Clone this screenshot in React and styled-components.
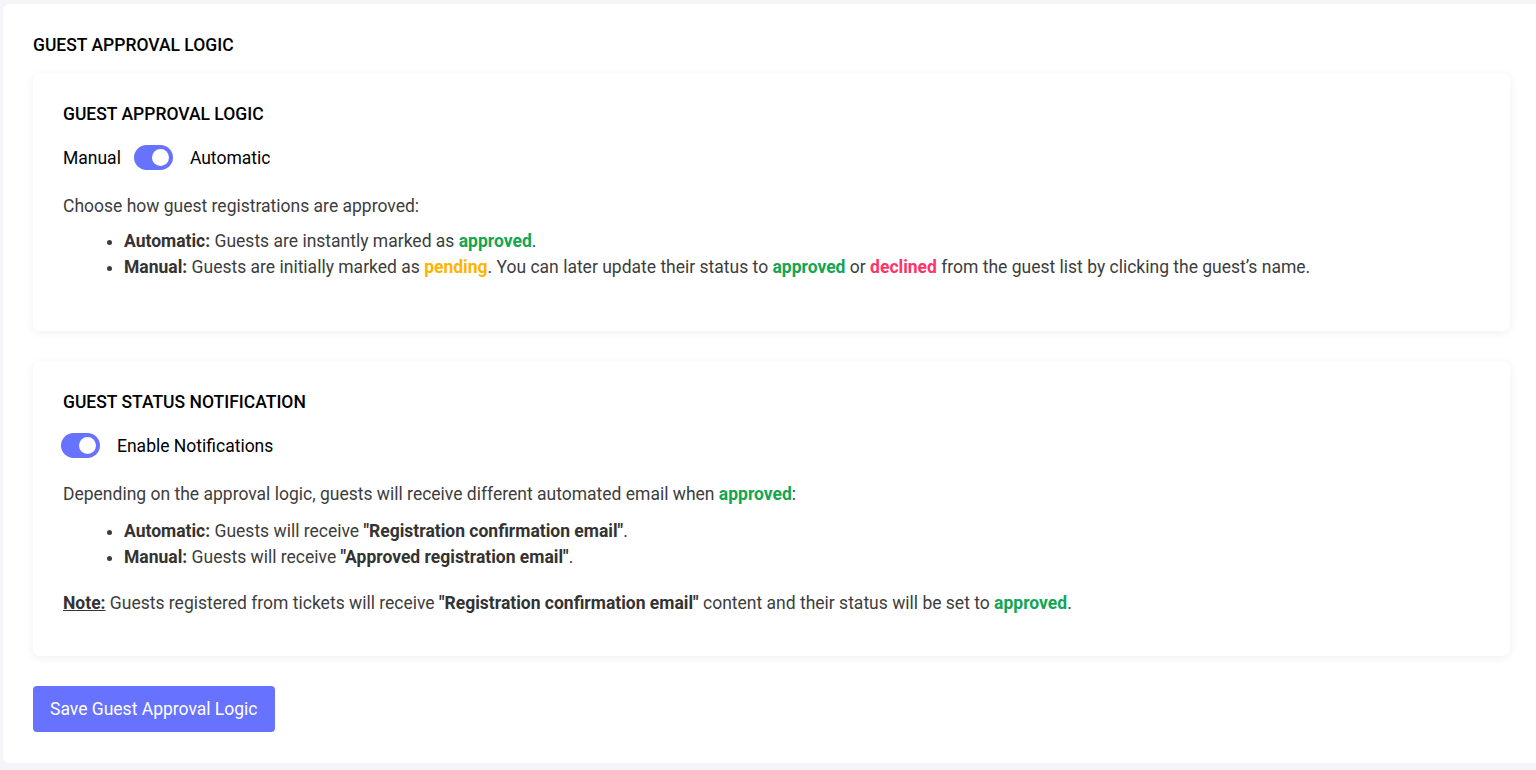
import React, { useState } from "react";
import styled, { createGlobalStyle } from "styled-components";

const GlobalStyle = createGlobalStyle`
  html, body {
    margin: 0;
    padding: 0;
    background: #f5f5f9;
    overflow: hidden;
  }
  body {
    font-family: Roboto, "Liberation Sans", Arial, sans-serif;
    font-size: 17.5px;
    color: #3d3d3d;
  }
  * { box-sizing: border-box; }
`;

const Page = styled.div`
  background: #ffffff;
  margin: 4px -4px 0 3px;
  padding: 29px 30px 31px 30px;
  border-radius: 6px;
  min-height: 759px;
`;

const PageTitle = styled.h2`
  margin: 0 0 16px;
  font-size: 17.5px;
  line-height: 24px;
  font-weight: 500;
  color: #000;
  text-transform: uppercase;
`;

const Card = styled.section`
  background: #fff;
  border-radius: 7px;
  box-shadow: 0 2px 8px rgba(40, 40, 70, 0.07);
  padding: 29px 30px 30px 30px;
  margin-bottom: 30px;
`;

const CardTitle = styled.h3`
  margin: 0 0 19px;
  font-size: 17.5px;
  line-height: 24px;
  font-weight: 500;
  color: #000;
`;

const ToggleRow = styled.div`
  display: flex;
  align-items: center;
  height: 25px;
  margin-left: ${(p) => p.$shift || 0}px;
  color: #000;
`;

const Label = styled.span`
  margin-right: ${(p) => p.$mr || 0}px;
  margin-left: ${(p) => p.$ml || 0}px;
`;

const Track = styled.button`
  width: 39px;
  height: 25px;
  border: none;
  padding: 0 4px;
  border-radius: 13px;
  background: ${(p) => (p.$on ? "#6772fe" : "#c9cbd6")};
  display: flex;
  align-items: center;
  justify-content: ${(p) => (p.$on ? "flex-end" : "flex-start")};
  cursor: pointer;
`;

const Knob = styled.span`
  width: 17px;
  height: 17px;
  border-radius: 50%;
  background: #fff;
`;

const Text = styled.p`
  margin: ${(p) => p.$top || 24}px 0 0;
  line-height: 24px;
`;

const List = styled.ul`
  margin: ${(p) => p.$top || 10}px 0 ${(p) => p.$bottom || 0}px;
  padding-left: 61px;
  line-height: 26px;
`;

const Strong = styled.b`
  font-weight: 700;
  color: #333;
`;

const Note = styled.b`
  font-weight: 700;
  text-decoration: underline;
  color: #333;
`;

const Status = styled.b`
  font-weight: 700;
  color: ${(p) => p.$color};
`;

const Spacer = styled.div`
  height: 11px;
`;

const SaveButton = styled.button`
  height: 46px;
  padding: 0 17px;
  border: none;
  border-radius: 4px;
  background: #6772fe;
  color: #fff;
  font-family: Roboto, "Liberation Sans", Arial, sans-serif;
  font-size: 17.5px;
  cursor: pointer;
`;

const GREEN = "#12a552";
const ORANGE = "#ffb400";
const PINK = "#ff3366";

function Toggle({ on, onChange }) {
  return (
    <Track $on={on} onClick={() => onChange(!on)}>
      <Knob />
    </Track>
  );
}

export default function App() {
  const [auto, setAuto] = useState(true);
  const [notify, setNotify] = useState(true);

  return (
    <>
      <GlobalStyle />
      <Page>
        <PageTitle>Guest Approval Logic</PageTitle>

        <Card>
          <CardTitle>GUEST APPROVAL LOGIC</CardTitle>
          <ToggleRow>
            <Label $mr={13}>Manual</Label>
            <Toggle on={auto} onChange={setAuto} />
            <Label $ml={17}>Automatic</Label>
          </ToggleRow>
          <Text $top={24}>Choose how guest registrations are approved:</Text>
          <List $bottom={21}>
            <li>
              <Strong>Automatic:</Strong> Guests are instantly marked as{" "}
              <Status $color={GREEN}>approved</Status>.
            </li>
            <li>
              <Strong>Manual:</Strong> Guests are initially marked as{" "}
              <Status $color={ORANGE}>pending</Status>. You can later update their
              status to <Status $color={GREEN}>approved</Status> or{" "}
              <Status $color={PINK}>declined</Status> from the guest list by
              clicking the guest’s name.
            </li>
          </List>
        </Card>

        <Card>
          <CardTitle>GUEST STATUS NOTIFICATION</CardTitle>
          <ToggleRow $shift={-2}>
            <Toggle on={notify} onChange={setNotify} />
            <Label $ml={17}>Enable Notifications</Label>
          </ToggleRow>
          <Text $top={24}>
            Depending on the approval logic, guests will receive different
            automated email when <Status $color={GREEN}>approved</Status>:
          </Text>
          <List $top={12}>
            <li>
              <Strong>Automatic:</Strong> Guests will receive{" "}
              <Strong>"Registration confirmation email"</Strong>.
            </li>
            <li>
              <Strong>Manual:</Strong> Guests will receive{" "}
              <Strong>"Approved registration email"</Strong>.
            </li>
          </List>
          <Text $top={21}>
            <Note>Note:</Note> Guests registered from tickets will receive{" "}
            <Strong>"Registration confirmation email"</Strong> content and their
            status will be set to <Status $color={GREEN}>approved</Status>.
          </Text>
          <Spacer />
        </Card>

        <SaveButton>Save Guest Approval Logic</SaveButton>
      </Page>
    </>
  );
}
